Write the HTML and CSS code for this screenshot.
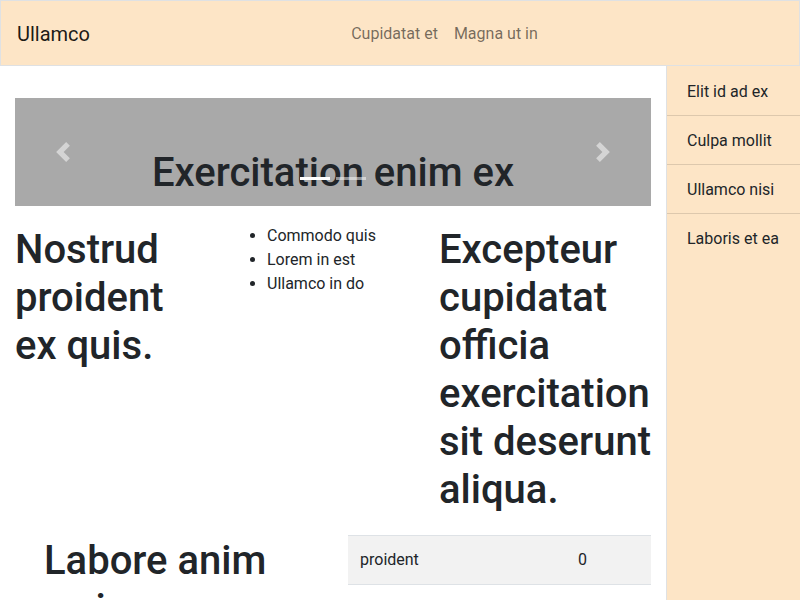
FILE: index.html
```html
<!DOCTYPE html>
<html lang="en">
<head>
<meta charset="utf-8">
<title>Ullamco</title>
<link rel="stylesheet" href="styles.css">
</head>
<body>
<div class="app">
  <header class="navbar">
    <a class="brand" href="#">Ullamco</a>
    <nav class="nav">
      <a class="nav-link" href="#">Cupidatat et</a>
      <a class="nav-link" href="#">Magna ut in</a>
    </nav>
  </header>
  <div class="layout">
    <main class="main">
      <section class="carousel">
        <h1 class="carousel-title">Exercitation enim ex</h1>
        <a class="carousel-control prev" href="#" aria-label="Previous">
          <svg width="20" height="20" viewBox="0 0 8 8"><path fill="#fff" d="M5.25 0l-4 4 4 4 1.5-1.5L4.25 4l2.5-2.5L5.25 0z"/></svg>
        </a>
        <a class="carousel-control next" href="#" aria-label="Next">
          <svg width="20" height="20" viewBox="0 0 8 8"><path fill="#fff" d="M2.75 0l-1.5 1.5L3.75 4l-2.5 2.5L2.75 8l4-4-4-4z"/></svg>
        </a>
        <ol class="indicators">
          <li class="active"></li>
          <li></li>
        </ol>
      </section>
      <div class="row-three">
        <div class="col">
          <h1 class="heading heading-narrow">Nostrud proident ex quis.</h1>
        </div>
        <div class="col">
          <ul class="list">
            <li>Commodo quis</li>
            <li>Lorem in est</li>
            <li>Ullamco in do</li>
          </ul>
        </div>
        <div class="col">
          <h1 class="heading">Excepteur cupidatat officia exercitation sit deserunt aliqua.</h1>
        </div>
      </div>
      <div class="row-two">
        <div class="col-wide">
          <h1 class="heading heading-low">Labore anim ex ipsum.</h1>
        </div>
        <div class="col-table">
          <table class="table">
            <tbody>
              <tr><td class="cell-name">proident</td><td>0</td></tr>
            </tbody>
          </table>
        </div>
      </div>
    </main>
    <aside class="sidebar">
      <a class="side-item" href="#">Elit id ad ex</a>
      <a class="side-item" href="#">Culpa mollit</a>
      <a class="side-item" href="#">Ullamco nisi</a>
      <a class="side-item" href="#">Laboris et ea</a>
    </aside>
  </div>
</div>
</body>
</html>
```
FILE: styles.css
```css
* { box-sizing: border-box; }
html, body { margin: 0; padding: 0; }
body {
  font-family: Roboto, "Liberation Sans", sans-serif;
  font-size: 16px;
  line-height: 24px;
  color: #212529;
  background: #fff;
}
a { text-decoration: none; }

.app {
  height: 100vh;
  display: flex;
  flex-direction: column;
  overflow: hidden;
}

/* Navbar */
.navbar {
  flex: 0 0 66px;
  display: flex;
  align-items: center;
  padding: 1px 16px 0;
  background: #fde5c6;
  border: 1px solid #dfe1e3;
}
.brand {
  font-size: 20px;
  line-height: 30px;
  color: rgba(0, 0, 0, 0.9);
  margin-right: 16px;
}
.nav {
  display: flex;
  margin: 0 auto;
}
.nav-link {
  padding: 1px 8px 0;
  color: rgba(0, 0, 0, 0.55);
  line-height: 24px;
}

/* Layout */
.layout {
  flex: 1;
  display: flex;
  min-height: 0;
}
.main {
  flex: 1;
  min-width: 0;
  padding: 32px 15px 0;
  overflow: hidden;
}
.sidebar {
  flex: 0 0 134px;
  display: flex;
  flex-direction: column;
  padding-top: 1px;
  background: #fde5c6;
  border-left: 1px solid #dfe1e3;
}
.side-item {
  padding: 13px 20px 11px;
  line-height: 24px;
  color: #212529;
  border-bottom: 1px solid rgba(0, 0, 0, 0.125);
}
.side-item:last-child { border-bottom: 0; }

/* Carousel */
.carousel {
  position: relative;
  height: 108px;
  background: #a9a9a9;
  padding-top: 51px;
  text-align: center;
}
.carousel-title {
  margin: 0;
  font-size: 40px;
  line-height: 48px;
  font-weight: 500;
}
.carousel-control {
  position: absolute;
  top: 0;
  bottom: 0;
  width: 15%;
  display: flex;
  align-items: center;
  justify-content: center;
  opacity: 0.5;
}
.carousel-control.prev { left: 0; }
.carousel-control.next { right: 0; }
.indicators {
  position: absolute;
  left: 0;
  right: 0;
  bottom: 0;
  margin: 0 0 16px;
  padding: 0;
  list-style: none;
  display: flex;
  justify-content: center;
}
.indicators li {
  width: 30px;
  height: 3px;
  margin: 10px 3px;
  background: #fff;
  opacity: 0.5;
}
.indicators li.active { opacity: 1; }

/* Rows */
.row-three {
  display: grid;
  grid-template-columns: repeat(3, 1fr);
  margin-top: 16px;
}
.heading {
  margin: 4px 0 0;
  font-size: 40px;
  line-height: 48px;
  font-weight: 500;
}
.heading-narrow { padding-right: 16px; }
.list {
  margin: 0;
  padding: 2px 0 0 40px;
}

.row-two {
  display: grid;
  grid-template-columns: 333px 1fr;
  margin-top: 21px;
}
.col-wide { padding: 0 44px 0 29px; }
.heading-low { margin-top: 2px; }
.table {
  width: 100%;
  border-collapse: collapse;
}
.table td {
  padding: 12px;
  background: #f2f2f2;
  border-top: 1px solid #dee2e6;
  border-bottom: 1px solid #dee2e6;
}
.cell-name { width: 218px; }
```
